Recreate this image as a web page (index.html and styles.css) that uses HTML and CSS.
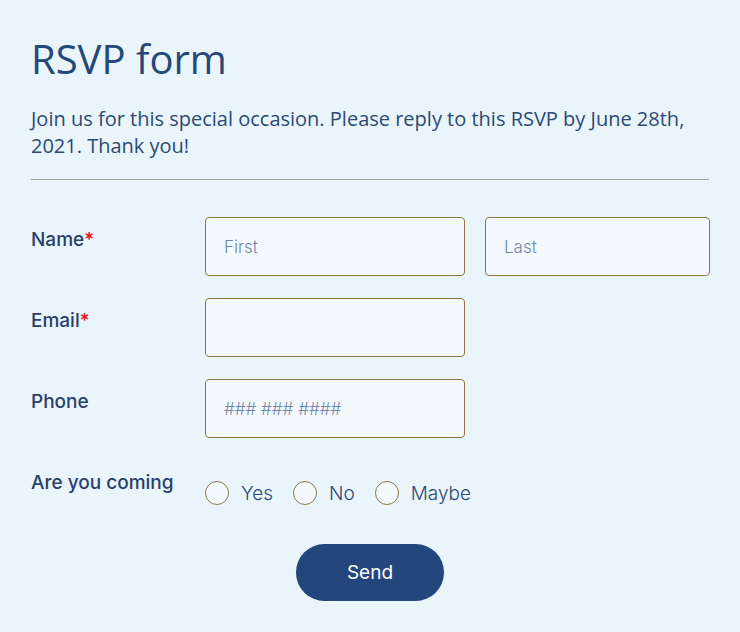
FILE: index.html
```html
<!DOCTYPE html>
<html lang="en">
<head>
<meta charset="utf-8">
<title>RSVP form</title>
<link rel="stylesheet" href="styles.css">
</head>
<body>
<main class="page">
  <h1 class="title">RSVP form</h1>
  <p class="intro">Join us for this special occasion. Please reply to this RSVP by June 28th, 2021. Thank you!</p>
  <hr class="divider">
  <form class="form">
    <div class="row">
      <label class="label">Name<span class="req">*</span></label>
      <div class="fields">
        <input class="input input-first" type="text" placeholder="First">
        <input class="input input-last" type="text" placeholder="Last">
      </div>
    </div>
    <div class="row">
      <label class="label">Email<span class="req">*</span></label>
      <div class="fields">
        <input class="input input-first" type="email">
      </div>
    </div>
    <div class="row">
      <label class="label">Phone</label>
      <div class="fields">
        <input class="input input-first" type="tel" placeholder="### ### ####">
      </div>
    </div>
    <div class="row row-radio">
      <span class="label">Are you coming</span>
      <div class="radios">
        <label class="radio"><input type="radio" name="coming"><span>Yes</span></label>
        <label class="radio"><input type="radio" name="coming"><span>No</span></label>
        <label class="radio"><input type="radio" name="coming"><span>Maybe</span></label>
      </div>
    </div>
    <div class="actions">
      <button type="button" class="send">Send</button>
    </div>
  </form>
</main>
</body>
</html>
```
FILE: styles.css
```css
html, body {
  margin: 0;
  padding: 0;
  background: #eaf4fb;
}
.page {
  padding: 29px 31px 0 31px;
  font-family: "Open Sans", sans-serif;
  color: #264878;
}
.title {
  margin: 0;
  font-size: 40px;
  font-weight: 400;
  line-height: 60px;
}
.intro {
  margin: 16px 0 0 0;
  font-size: 20px;
  line-height: 27px;
  color: #2c4a74;
}
.divider {
  margin: 20px 0 0 0;
  border: 0;
  border-top: 1px solid #a3a39a;
  height: 0;
}
.form {
  margin-top: 37px;
  font-family: Inter, "Lato", sans-serif;
}
.row {
  display: flex;
  margin-bottom: 22px;
}
.label {
  width: 174px;
  flex: none;
  font-size: 19px;
  font-weight: 500;
  color: #28406a;
  padding-top: 12px;
  line-height: 22px;
}
.req {
  color: #e8101a;
}
.fields {
  display: flex;
  gap: 20px;
}
.input {
  box-sizing: border-box;
  height: 59px;
  border: 1px solid #8c7742;
  border-radius: 4px;
  background: #f4f9fd;
  padding: 0 18px;
  font-family: Inter, sans-serif;
  font-size: 17px;
  font-weight: 300;
  color: #28406a;
  outline: none;
}
.input::placeholder {
  color: #6f87aa;
}
.input-first {
  width: 260px;
}
.input-last {
  width: 225px;
}
.radios {
  display: flex;
  gap: 20px;
  padding-top: 21px;
}
.radio {
  display: flex;
  align-items: center;
  gap: 12px;
  font-size: 19px;
  font-weight: 300;
  color: #2c4a74;
}
.radio input {
  appearance: none;
  -webkit-appearance: none;
  margin: 0;
  width: 24px;
  height: 24px;
  border: 1px solid #8c7742;
  border-radius: 50%;
  background: #f4f9fd;
}
.actions {
  display: flex;
  justify-content: center;
  margin-top: 39px;
}
.send {
  width: 148px;
  height: 57px;
  border: 0;
  border-radius: 29px;
  background: #23467c;
  color: #ffffff;
  font-family: Inter, sans-serif;
  font-size: 19px;
  font-weight: 400;
  cursor: pointer;
}
```
